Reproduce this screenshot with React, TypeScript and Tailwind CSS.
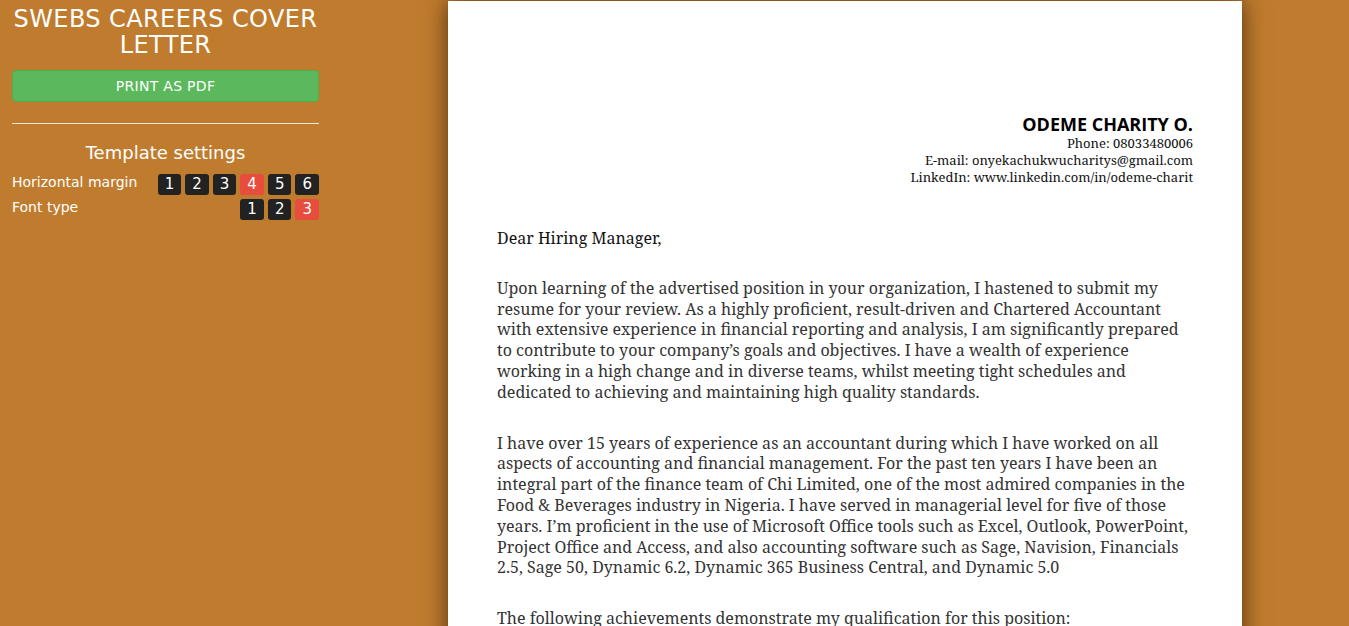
import React from "react";

const MARGINS = ["1", "2", "3", "4", "5", "6"];
const FONTS = ["1", "2", "3"];

function OptionButton({ label, active }: { label: string; active: boolean }) {
  return (
    <span
      className={`inline-flex h-[21px] items-center justify-center rounded-[3px] px-[7px] text-[15px] leading-none text-white ${
        active ? "bg-[#e74c3c]" : "bg-[#222222]"
      }`}
    >
      {label}
    </span>
  );
}

function Sidebar() {
  return (
    <aside className="w-[331px] shrink-0 px-3 pt-[6px] font-['DejaVu_Sans',sans-serif] text-white">
      <h1 className="text-center text-[24px] leading-[26px] tracking-[0.4px] uppercase">
        Swebs Careers Cover Letter
      </h1>
      <button className="mt-3 h-[32px] w-full rounded-[4px] border border-[#4cae4c] bg-[#5cb85c] text-[14px] tracking-[0.3px] uppercase text-white">
        Print as PDF
      </button>
      <hr className="mt-[21px] border-t border-[#f2e6d6]" />
      <h2 className="mt-[16px] text-center text-[18px] leading-[26px]">Template settings</h2>
      <div className="mt-[8px] flex items-start justify-between">
        <span className="text-[14px] leading-[16px]">Horizontal margin</span>
        <div className="flex gap-[4px]">
          {MARGINS.map((m) => (
            <OptionButton key={m} label={m} active={m === "4"} />
          ))}
        </div>
      </div>
      <div className="mt-[4px] flex items-start justify-between">
        <span className="text-[14px] leading-[16px]">Font type</span>
        <div className="flex gap-[4px]">
          {FONTS.map((f) => (
            <OptionButton key={f} label={f} active={f === "3"} />
          ))}
        </div>
      </div>
    </aside>
  );
}

function Letter() {
  return (
    <main className="ml-[117px] mt-px min-h-[1123px] w-[794px] shrink-0 bg-white px-[49px] pt-[112px] shadow-[0_0_22px_rgba(40,20,0,0.75)]">
      <header className="text-right">
        <div className="font-['Open_Sans',sans-serif] text-[18px] font-bold leading-[22px] text-black">
          ODEME CHARITY O.
        </div>
        <div className="font-['Noto_Serif','DejaVu_Serif',serif] text-[13px] leading-[17px] text-[#111]">
          <p>Phone: 08033480006</p>
          <p>E-mail: onyekachukwucharitys@gmail.com</p>
          <p>LinkedIn: www.linkedin.com/in/odeme-charit</p>
        </div>
      </header>
      <div className="mt-[42px] font-['Noto_Serif','DejaVu_Serif',serif] text-[16px] leading-[20.8px] text-[#333]">
        <p className="text-[#111]">Dear Hiring Manager,</p>
        <p className="mt-[29px]">
          Upon learning of the advertised position in your organization, I hastened to submit my
          resume for your review. As a highly proficient, result-driven and Chartered Accountant
          with extensive experience in financial reporting and analysis, I am significantly prepared
          to contribute to your company’s goals and objectives. I have a wealth of experience
          working in a high change and in diverse teams, whilst meeting tight schedules and
          dedicated to achieving and maintaining high quality standards.
        </p>
        <p className="mt-[30px]">
          I have over 15 years of experience as an accountant during which I have worked on all
          aspects of accounting and financial management. For the past ten years I have been an
          integral part of the finance team of Chi Limited, one of the most admired companies in the
          Food &amp; Beverages industry in Nigeria. I have served in managerial level for five of those
          years. I’m proficient in the use of Microsoft Office tools such as Excel, Outlook, PowerPoint,
          Project Office and Access, and also accounting software such as Sage, Navision, Financials
          2.5, Sage 50, Dynamic 6.2, Dynamic 365 Business Central, and Dynamic 5.0
        </p>
        <p className="mt-[30px]">
          The following achievements demonstrate my qualification for this position:
        </p>
      </div>
    </main>
  );
}

export default function App() {
  return (
    <div className="flex min-h-screen items-start bg-[#c07c2e]">
      <Sidebar />
      <Letter />
    </div>
  );
}
